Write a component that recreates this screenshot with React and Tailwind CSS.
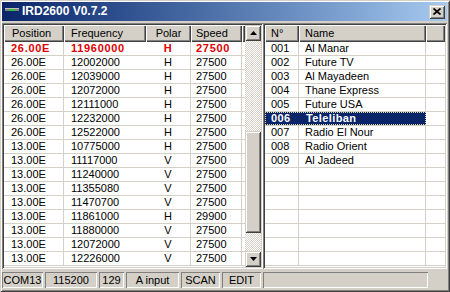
import React from "react";

const leftRows = [
  ["26.00E", "11960000", "H", "27500"],
  ["26.00E", "12002000", "H", "27500"],
  ["26.00E", "12039000", "H", "27500"],
  ["26.00E", "12072000", "H", "27500"],
  ["26.00E", "12111000", "H", "27500"],
  ["26.00E", "12232000", "H", "27500"],
  ["26.00E", "12522000", "H", "27500"],
  ["13.00E", "10775000", "H", "27500"],
  ["13.00E", "11117000", "V", "27500"],
  ["13.00E", "11240000", "V", "27500"],
  ["13.00E", "11355080", "V", "27500"],
  ["13.00E", "11470700", "V", "27500"],
  ["13.00E", "11861000", "H", "29900"],
  ["13.00E", "11880000", "V", "27500"],
  ["13.00E", "12072000", "V", "27500"],
  ["13.00E", "12226000", "V", "27500"],
];

const rightRows = [
  ["001", "Al Manar"],
  ["002", "Future TV"],
  ["003", "Al Mayadeen"],
  ["004", "Thane Express"],
  ["005", "Future USA"],
  ["006", "Teleliban"],
  ["007", "Radio El Nour"],
  ["008", "Radio Orient"],
  ["009", "Al Jadeed"],
  ["", ""],
  ["", ""],
  ["", ""],
  ["", ""],
  ["", ""],
  ["", ""],
  ["", ""],
];

const hdr =
  "h-[17px] leading-[17px] bg-[#d4d0c8] shadow-[inset_1px_1px_0_#ffffff,inset_-1px_-1px_0_#404040,inset_-2px_-2px_0_#808080] whitespace-nowrap overflow-hidden";
const raised =
  "bg-[#d4d0c8] shadow-[inset_1px_1px_0_#d4d0c8,inset_-1px_-1px_0_#404040,inset_2px_2px_0_#ffffff,inset_-2px_-2px_0_#808080]";
const sunken =
  "shadow-[inset_1px_1px_0_#808080,inset_-1px_-1px_0_#ffffff,inset_2px_2px_0_#404040,inset_-2px_-2px_0_#d4d0c8]";
const panel =
  "h-[16px] leading-[16px] text-center shadow-[inset_1px_1px_0_#808080,inset_-1px_-1px_0_#ffffff] whitespace-nowrap";

function Arrow({ down }) {
  return (
    <svg width="7" height="4" viewBox="0 0 7 4">
      {down ? (
        <path d="M0 0 H7 L3.5 4 Z" fill="#000" />
      ) : (
        <path d="M0 4 H7 L3.5 0 Z" fill="#000" />
      )}
    </svg>
  );
}

export default function App() {
  return (
    <div className="w-[450px] h-[292px] bg-[#d4d0c8] pt-[2px] pl-[2px] pr-[3px] pb-[2px] flex flex-col font-['Liberation_Sans',Arial,sans-serif] text-[11px] text-black shadow-[inset_1px_1px_0_#d4d0c8,inset_-1px_-1px_0_#404040,inset_2px_2px_0_#ffffff,inset_-2px_-2px_0_#808080] overflow-hidden">
      {/* Title bar */}
      <div className="h-[19px] flex items-center bg-linear-to-r from-[#0a246a] to-[#a6caf0] pl-[3px] pr-[2px]">
        <div className="w-[14px] h-[14px] flex flex-col pt-[3px]">
          <div className="h-[1px] bg-[#c0c0c0]" />
          <div className="h-[2px] flex">
            <div className="w-[4px] bg-[#808080]" />
            <div className="w-[6px] bg-[#30c030]" />
            <div className="w-[4px] bg-[#808080]" />
          </div>
        </div>
        <div className="ml-[3px] text-white font-bold text-[12px] leading-[19px] whitespace-nowrap">
          IRD2600 V0.7.2
        </div>
        <div className="flex-1" />
        <div className={`w-[16px] h-[14px] flex items-center justify-center ${raised}`}>
          <svg width="8" height="7" viewBox="0 0 8 7">
            <path d="M0.5 0.5 L7.5 6.5 M7.5 0.5 L0.5 6.5" stroke="#000" strokeWidth="1.7" />
          </svg>
        </div>
      </div>

      {/* Lists */}
      <div className="mt-[2px] flex h-[246px]">
        {/* Left list */}
        <div className={`w-[261px] h-[246px] p-[2px] bg-white ${sunken} flex`}>
          <div className="w-[241px] flex flex-col overflow-hidden">
            <div className="flex">
              <div className={`${hdr} w-[60px] pl-[8px]`}>Position</div>
              <div className={`${hdr} w-[82px] pl-[7px]`}>Frequency</div>
              <div className={`${hdr} w-[45px] text-center`}>Polar</div>
              <div className={`${hdr} w-[51px] pl-[5px]`}>Speed</div>
              <div className={`${hdr} w-[3px]`} />
            </div>
            {leftRows.map((r, i) => {
              const first = i === 0;
              const t = first
                ? "text-[#e00000] font-bold tracking-[0.7px]"
                : "";
              return (
                <div
                  key={i}
                  className={`flex h-[14px] leading-[13px] border-b border-[#d4d0c8] whitespace-nowrap ${t}`}
                >
                  <div className="w-[60px] border-r border-[#d4d0c8] pl-[7px]">{r[0]}</div>
                  <div className="w-[82px] pl-[7px]">{r[1]}</div>
                  <div className="w-[45px] border-r border-[#d4d0c8] text-center">{r[2]}</div>
                  <div className="w-[51px] border-r border-[#d4d0c8] pl-[5px]">{r[3]}</div>
                  <div className="w-[3px]" />
                </div>
              );
            })}
          </div>
          {/* Scrollbar */}
          <div className="w-[16px] flex flex-col">
            <div className={`h-[16px] flex items-center justify-center ${raised}`}>
              <Arrow />
            </div>
            <div className="flex-1 flex flex-col bg-[repeating-conic-gradient(#d4d0c8_0%_25%,#ffffff_0%_50%)] bg-[length:2px_2px]">
              <div className="h-[90px]" />
              <div className={`h-[102px] ${raised}`} />
            </div>
            <div className={`h-[16px] flex items-center justify-center ${raised}`}>
              <Arrow down />
            </div>
          </div>
        </div>

        {/* Right list */}
        <div className={`w-[184px] h-[246px] p-[2px] bg-white ${sunken} flex flex-col`}>
          <div className="flex">
            <div className={`${hdr} w-[34px] pl-[6px]`}>N°</div>
            <div className={`${hdr} w-[127px] pl-[6px]`}>Name</div>
            <div className={`${hdr} w-[19px]`} />
          </div>
          <div className="flex-1 overflow-hidden">
            {rightRows.map((r, i) => {
              const sel = i === 5;
              return (
                <div
                  key={i}
                  className="flex h-[14px] leading-[13px] border-b border-[#d4d0c8] whitespace-nowrap"
                >
                  {sel ? (
                    <div className="w-[161px] flex bg-[#0a246a] text-white font-bold tracking-[0.4px] outline-1 outline-dotted outline-[#d8d8a0] -outline-offset-1">
                      <div className="w-[34px] pl-[6px]">{r[0]}</div>
                      <div className="w-[127px] pl-[7px]">{r[1]}</div>
                    </div>
                  ) : (
                    <>
                      <div className="w-[34px] border-r border-[#d4d0c8] pl-[6px]">{r[0]}</div>
                      <div className="w-[127px] border-r border-[#d4d0c8] pl-[6px]">{r[1]}</div>
                    </>
                  )}
                  <div className="w-[19px]" />
                </div>
              );
            })}
          </div>
        </div>
      </div>

      {/* Status bar */}
      <div className="pt-[3px] flex gap-[2px]">
        <div className={`${panel} w-[41px]`}>COM13</div>
        <div className={`${panel} w-[52px]`}>115200</div>
        <div className={`${panel} w-[25px]`}>129</div>
        <div className={`${panel} w-[53px]`}>A input</div>
        <div className={`${panel} w-[39px]`}>SCAN</div>
        <div className={`${panel} w-[39px]`}>EDIT</div>
        <div className={`${panel} w-[165px]`} />
      </div>
    </div>
  );
}
